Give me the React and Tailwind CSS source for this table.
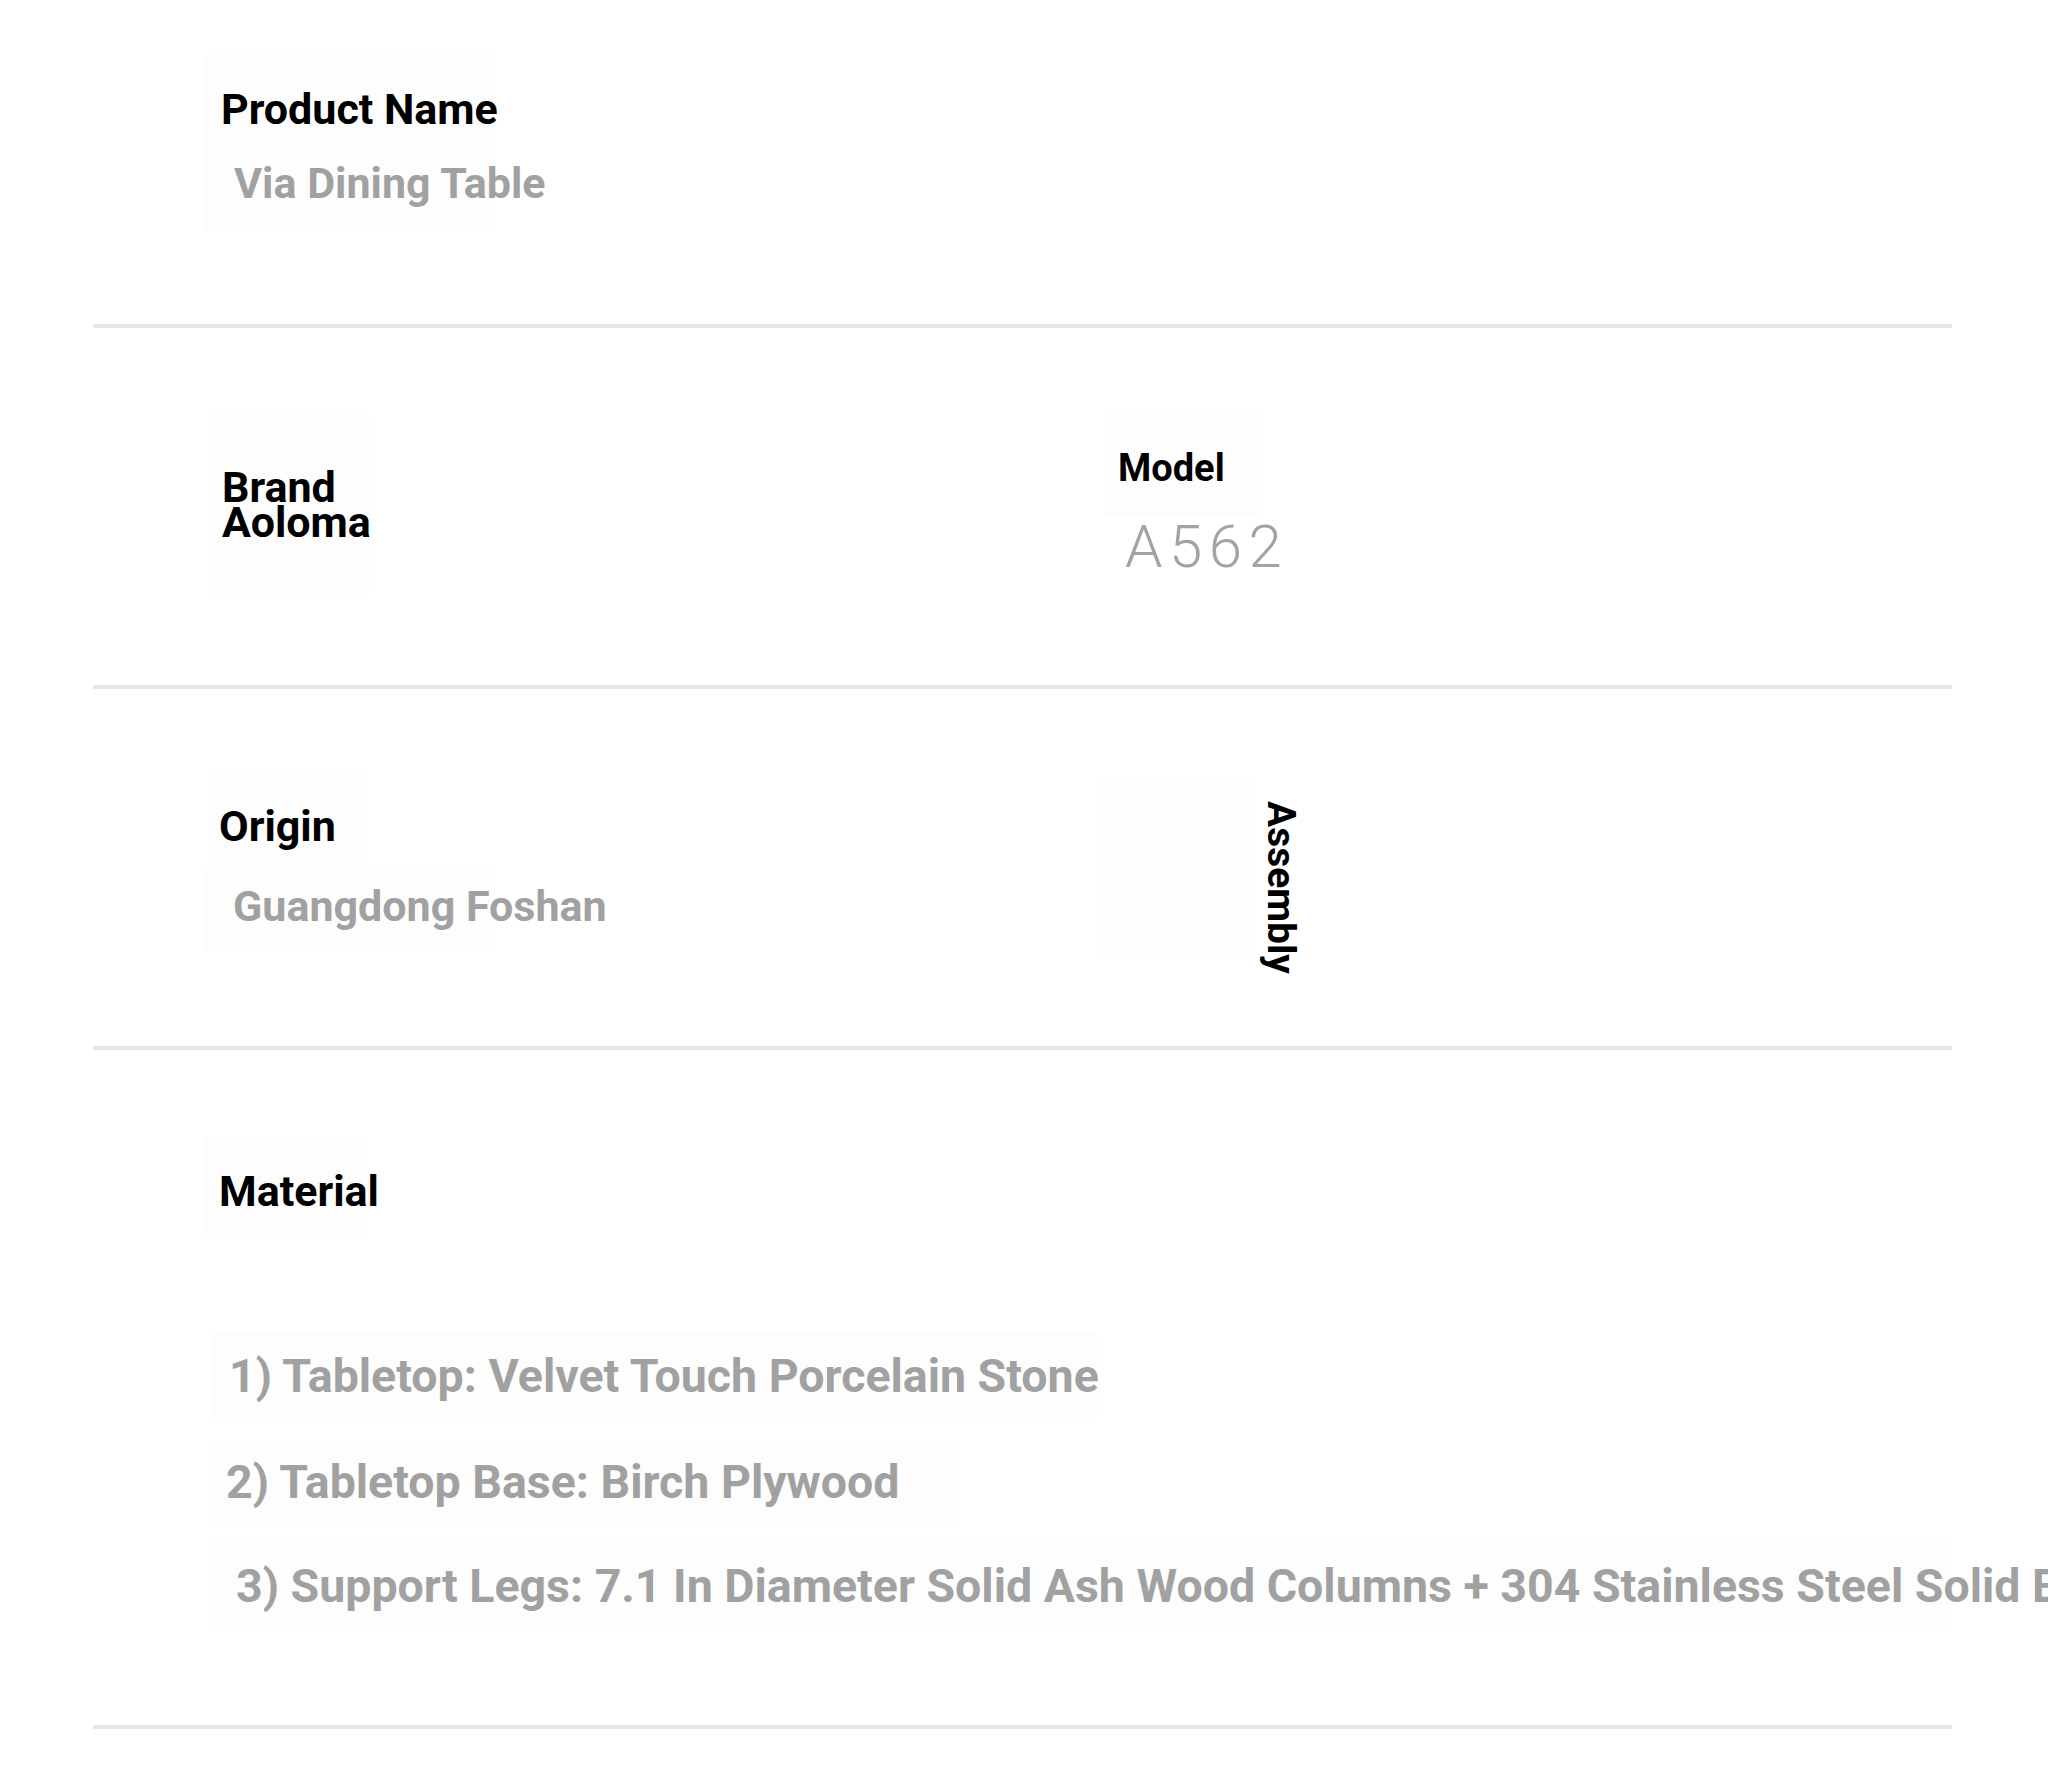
import React from "react";

const Divider = () => <div className="w-full h-[4px] bg-[#e6e6e6]" />;

const MATERIALS = [
  {
    text: "1) Tabletop: Velvet Touch Porcelain Stone",
    box: "ml-[120px] mt-[94px] w-[884px] h-[89px] pl-[16px] pt-[17px]",
  },
  {
    text: "2) Tabletop Base: Birch Plywood",
    box: "ml-[116px] mt-[20px] w-[751px] h-[82px] pl-[17px] pt-[14px]",
  },
  {
    text: "3) Support Legs: 7.1 In Diameter Solid Ash Wood Columns + 304 Stainless Steel Solid Base",
    box: "ml-[116px] mt-[18px] h-[85px] pl-[27px] pt-[18px]",
  },
];

const App = () => {
  return (
    <div className="w-full min-h-[1773px] overflow-hidden bg-white font-['Roboto','Liberation_Sans',sans-serif]">
      <div className="pl-[93px] pr-[96px]">
        {/* Product name */}
        <section className="h-[324px] pt-[55px]">
          <div className="ml-[112px] w-[290px] h-[177px] bg-[#fdfdfd] pt-[29px] pl-[16px]">
            <h3 className="text-[43px] leading-[50px] font-bold text-black whitespace-nowrap">
              Product Name
            </h3>
            <p className="mt-[24px] ml-[13px] text-[43px] leading-[50px] font-bold text-[#a1a1a1] whitespace-nowrap">
              Via Dining Table
            </p>
          </div>
        </section>
        <Divider />

        {/* Brand / Model */}
        <section className="h-[357px] flex">
          <div className="w-[1011px] shrink-0 pt-[86px]">
            <div className="ml-[116px] w-[161px] h-[180px] bg-[#fdfdfd] pt-[56px] pl-[13px]">
              <h3 className="text-[43px] leading-[35px] font-bold text-black whitespace-nowrap">
                Brand
              </h3>
              <p className="text-[43px] leading-[35px] font-bold text-black whitespace-nowrap">
                Aoloma
              </p>
            </div>
          </div>
          <div className="flex-1 pt-[86px]">
            <div className="w-[159px] h-[102px] bg-[#fdfdfd] pt-[31px] pl-[14px]">
              <h3 className="text-[38px] leading-[46px] font-bold text-black">Model</h3>
            </div>
            <p className="-mt-[5px] ml-[21px] text-[60px] leading-[72px] font-light tracking-[6.5px] text-[#a3a3a3]">
              A562
            </p>
          </div>
        </section>
        <Divider />

        {/* Origin / Assembly */}
        <section className="h-[357px] flex">
          <div className="w-[1004px] shrink-0 pt-[84px]">
            <div className="ml-[115px] w-[159px] h-[84px] bg-[#fdfdfd] pt-[28px] pl-[11px]">
              <h3 className="text-[43px] leading-[50px] font-bold text-black">Origin</h3>
            </div>
            <div className="ml-[110px] mt-[8px] w-[292px] h-[87px] bg-[#fdfdfd] pt-[16px] pl-[30px]">
              <p className="text-[43px] leading-[50px] font-bold text-[#a1a1a1] whitespace-nowrap">
                Guangdong Foshan
              </p>
            </div>
          </div>
          <div className="flex-1 flex items-start">
            <div className="mt-[88px] w-[157px] h-[183px] bg-[#fdfdfd]" />
            <h3 className="mt-[112px] ml-[4px] text-[39px] leading-[46px] font-bold text-black [writing-mode:vertical-rl]">
              Assembly
            </h3>
          </div>
        </section>
        <Divider />

        {/* Material */}
        <section className="h-[675px] pt-[86px]">
          <div className="ml-[112px] w-[161px] h-[102px] bg-[#fdfdfd] pt-[30px] pl-[14px]">
            <h3 className="text-[43px] leading-[50px] font-bold text-black">Material</h3>
          </div>
          {MATERIALS.map((m, i) => (
            <div key={i} className={`${m.box} bg-[#fdfdfd]`}>
              <p className="text-[46.5px] leading-[55px] font-bold text-[#a1a1a1] whitespace-nowrap">
                {m.text}
              </p>
            </div>
          ))}
        </section>
        <Divider />
      </div>
    </div>
  );
};

export default App;
